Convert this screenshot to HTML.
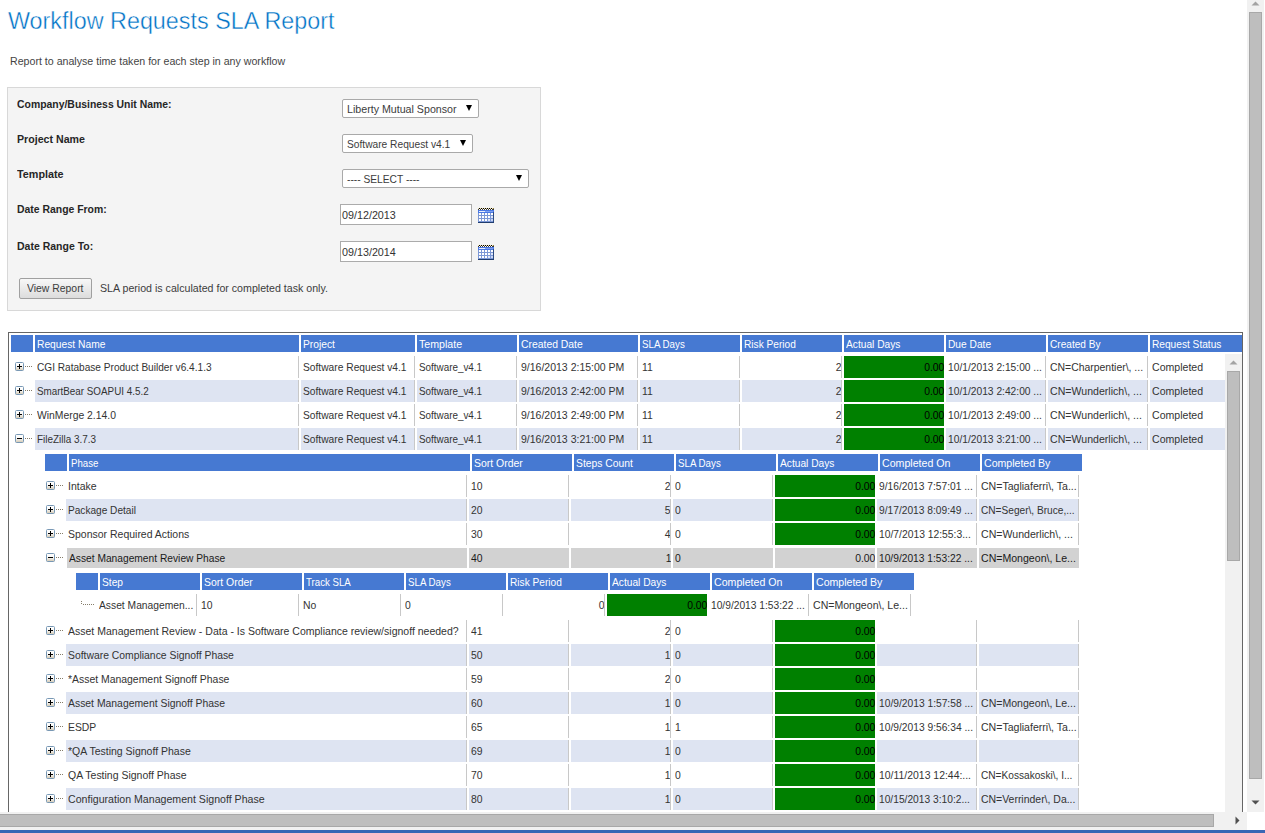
<!DOCTYPE html>
<html lang="en"><head><meta charset="utf-8"><title>Workflow Requests SLA Report</title>
<style>
html,body{margin:0;padding:0;background:#fff;}
body{width:1265px;height:833px;overflow:hidden;position:relative;font-family:"Liberation Sans",sans-serif;color:#333;}
.a{position:absolute;white-space:nowrap;overflow:hidden;}
.t{position:absolute;white-space:nowrap;}
.title{left:8px;top:1px;font-size:23px;letter-spacing:0.0px;color:#0072c6;line-height:40px;height:40px;-webkit-text-stroke:0.4px #fff;}
.sub{left:10px;top:52px;font-size:10.75px;letter-spacing:0.0px;color:#444;line-height:18px;}
.panel{left:7px;top:87px;width:532px;height:222px;border:1px solid #d8d8d8;background:#f4f4f4;}
.lab{left:17px;font-weight:bold;font-size:10.75px;letter-spacing:0.0px;color:#262626;line-height:18px;}
.sel{height:17px;border:1px solid #a9a9a9;border-radius:2px;background:#fff;}
.selt{font-size:10.75px;letter-spacing:0.0px;color:#3c3c3c;line-height:17px;}
.arr{position:absolute;width:0;height:0;border-left:3.5px solid transparent;border-right:3.5px solid transparent;border-top:6px solid #000;}
.inp{height:19px;border:1px solid #ababab;background:#fff;}
.inpt{font-size:10.75px;letter-spacing:0.0px;color:#333;line-height:19px;}
.btn{left:19px;top:278px;width:71px;height:19px;border:1px solid #a0a0a0;border-radius:2px;background:linear-gradient(#f8f8f8,#dcdcdc);}
.btnt{font-size:10.75px;letter-spacing:0.0px;color:#3c3c3c;line-height:18px;}
.h{position:absolute;height:17px;background:#4679d2;color:#fff;font-size:10.75px;letter-spacing:0.0px;line-height:19px;white-space:nowrap;overflow:hidden;box-sizing:border-box;padding-left:2px;}
.c{position:absolute;height:22px;box-sizing:border-box;border-right:1px solid #c8c8c8;font-size:11.5px;letter-spacing:0.0px;line-height:22px;white-space:nowrap;overflow:hidden;padding-left:2px;color:#333;}
.c.r{text-align:right;padding-left:0;}
.c.alt{background:#dee4f2;}
.c.n{border-right:0;}
.c.g{background:#008000;color:#000;border-right:0;}
.c.s{background:#d2d2d2;height:20px;line-height:20px;border-right:0;color:#1a1a1a;}
.x{display:inline-block;transform-origin:0 50%;}
.x.r{transform-origin:100% 50%;}
.ic{position:absolute;width:9px;height:9px;}
.d{position:absolute;width:1px;height:1px;background:#857d6b;}
</style></head>
<body>
<div class="t title"><span class="x" style="transform:scaleX(1.015)">Workflow Requests SLA Report</span></div>
<div class="t sub"><span class="x" style="transform:scaleX(0.988)">Report to analyse time taken for each step in any workflow</span></div>
<div class="a panel"></div>
<div class="t lab" style="top:95px"><span class="x" style="transform:scaleX(0.969)">Company/Business Unit Name:</span></div>
<div class="t lab" style="top:130px"><span class="x" style="transform:scaleX(0.988)">Project Name</span></div>
<div class="t lab" style="top:165px"><span class="x" style="transform:scaleX(1.004)">Template</span></div>
<div class="t lab" style="top:200px"><span class="x" style="transform:scaleX(0.969)">Date Range From:</span></div>
<div class="t lab" style="top:237px"><span class="x" style="transform:scaleX(0.976)">Date Range To:</span></div>
<div class="a sel" style="left:342px;top:99px;width:135px"></div><div class="t selt" style="left:347px;top:101px"><span class="x" style="transform:scaleX(0.991)">Liberty Mutual Sponsor</span></div><div class="arr" style="left:466px;top:105px"></div>
<div class="a sel" style="left:342px;top:134px;width:129px"></div><div class="t selt" style="left:347px;top:136px"><span class="x" style="transform:scaleX(0.949)">Software Request v4.1</span></div><div class="arr" style="left:460px;top:140px"></div>
<div class="a sel" style="left:342px;top:169px;width:185px"></div><div class="t selt" style="left:347px;top:171px"><span class="x" style="transform:scaleX(0.951)">---- SELECT ----</span></div><div class="arr" style="left:516px;top:175px"></div>
<div class="a inp" style="left:340px;top:204px;width:130px"></div><div class="t inpt" style="left:342px;top:206px"><span class="x">09/12/2013</span></div><svg class="a" style="left:478px;top:208px" width="16" height="15" viewBox="0 0 16 15" shape-rendering="crispEdges">
<rect x="0" y="0" width="16" height="1" fill="#efe2b0"/>
<rect x="0" y="1" width="16" height="1" fill="#3a3a3a"/>
<g fill="#000"><rect x="1" y="0" width="1" height="1"/><rect x="3" y="0" width="1" height="1"/><rect x="5" y="0" width="1" height="1"/><rect x="7" y="0" width="1" height="1"/><rect x="9" y="0" width="1" height="1"/><rect x="11" y="0" width="1" height="1"/><rect x="13" y="0" width="1" height="1"/><rect x="15" y="0" width="1" height="1" fill="#8a7a40"/></g>
<g fill="#fff"><rect x="1" y="1" width="1" height="1"/><rect x="3" y="1" width="1" height="1"/><rect x="5" y="1" width="1" height="1"/><rect x="7" y="1" width="1" height="1"/><rect x="9" y="1" width="1" height="1"/><rect x="11" y="1" width="1" height="1"/><rect x="13" y="1" width="1" height="1"/></g>
<rect x="0" y="2" width="16" height="3" fill="#4a78e4"/>
<rect x="1" y="3" width="6" height="1" fill="#e8eefc"/><rect x="7" y="3" width="8" height="1" fill="#7fa0ee"/>
<rect x="0" y="5" width="16" height="10" fill="#7b97d6"/>
<rect x="15" y="4" width="1" height="11" fill="#2c4a80"/>
<rect x="0" y="14" width="16" height="1" fill="#1f3c6e"/>
<g fill="#fff">
<rect x="1" y="5" width="2" height="2"/><rect x="4" y="5" width="2" height="2"/><rect x="7" y="5" width="2" height="2"/><rect x="10" y="5" width="2" height="2"/><rect x="13" y="5" width="2" height="2"/>
<rect x="1" y="8" width="2" height="2"/><rect x="4" y="8" width="2" height="2"/><rect x="7" y="8" width="2" height="2"/><rect x="10" y="8" width="2" height="2"/><rect x="13" y="8" width="2" height="2" fill="#dfe7fa"/>
<rect x="1" y="11" width="2" height="2"/><rect x="4" y="11" width="2" height="2"/><rect x="7" y="11" width="2" height="2"/><rect x="10" y="11" width="2" height="2" fill="#dfe7fa"/><rect x="13" y="11" width="2" height="2" fill="#c9d6f5"/>
</g></svg>
<div class="a inp" style="left:340px;top:241px;width:130px"></div><div class="t inpt" style="left:342px;top:243px"><span class="x">09/13/2014</span></div><svg class="a" style="left:478px;top:245px" width="16" height="15" viewBox="0 0 16 15" shape-rendering="crispEdges">
<rect x="0" y="0" width="16" height="1" fill="#efe2b0"/>
<rect x="0" y="1" width="16" height="1" fill="#3a3a3a"/>
<g fill="#000"><rect x="1" y="0" width="1" height="1"/><rect x="3" y="0" width="1" height="1"/><rect x="5" y="0" width="1" height="1"/><rect x="7" y="0" width="1" height="1"/><rect x="9" y="0" width="1" height="1"/><rect x="11" y="0" width="1" height="1"/><rect x="13" y="0" width="1" height="1"/><rect x="15" y="0" width="1" height="1" fill="#8a7a40"/></g>
<g fill="#fff"><rect x="1" y="1" width="1" height="1"/><rect x="3" y="1" width="1" height="1"/><rect x="5" y="1" width="1" height="1"/><rect x="7" y="1" width="1" height="1"/><rect x="9" y="1" width="1" height="1"/><rect x="11" y="1" width="1" height="1"/><rect x="13" y="1" width="1" height="1"/></g>
<rect x="0" y="2" width="16" height="3" fill="#4a78e4"/>
<rect x="1" y="3" width="6" height="1" fill="#e8eefc"/><rect x="7" y="3" width="8" height="1" fill="#7fa0ee"/>
<rect x="0" y="5" width="16" height="10" fill="#7b97d6"/>
<rect x="15" y="4" width="1" height="11" fill="#2c4a80"/>
<rect x="0" y="14" width="16" height="1" fill="#1f3c6e"/>
<g fill="#fff">
<rect x="1" y="5" width="2" height="2"/><rect x="4" y="5" width="2" height="2"/><rect x="7" y="5" width="2" height="2"/><rect x="10" y="5" width="2" height="2"/><rect x="13" y="5" width="2" height="2"/>
<rect x="1" y="8" width="2" height="2"/><rect x="4" y="8" width="2" height="2"/><rect x="7" y="8" width="2" height="2"/><rect x="10" y="8" width="2" height="2"/><rect x="13" y="8" width="2" height="2" fill="#dfe7fa"/>
<rect x="1" y="11" width="2" height="2"/><rect x="4" y="11" width="2" height="2"/><rect x="7" y="11" width="2" height="2"/><rect x="10" y="11" width="2" height="2" fill="#dfe7fa"/><rect x="13" y="11" width="2" height="2" fill="#c9d6f5"/>
</g></svg>
<div class="a btn"></div><div class="t btnt" style="left:27px;top:279px"><span class="x" style="transform:scaleX(0.968)">View Report</span></div>
<div class="t btnt" style="left:100px;top:279px"><span class="x" style="transform:scaleX(0.989)">SLA period is calculated for completed task only.</span></div>
<div class="a" style="left:8px;top:332px;width:1233px;height:480px;border:1px solid #666;border-bottom:0"></div>
<div class="h" style="left:11px;top:335px;width:22px"></div><div class="h" style="left:35px;top:335px;width:264px"><span class="x" style="transform:scaleX(0.954)">Request Name</span></div><div class="h" style="left:301px;top:335px;width:114px"><span class="x" style="transform:scaleX(0.953)">Project</span></div><div class="h" style="left:417px;top:335px;width:100px"><span class="x" style="transform:scaleX(0.988)">Template</span></div><div class="h" style="left:519px;top:335px;width:119px"><span class="x" style="transform:scaleX(0.966)">Created Date</span></div><div class="h" style="left:640px;top:335px;width:100px"><span class="x" style="transform:scaleX(0.906)">SLA Days</span></div><div class="h" style="left:742px;top:335px;width:100px"><span class="x" style="transform:scaleX(0.942)">Risk Period</span></div><div class="h" style="left:844px;top:335px;width:100px"><span class="x" style="transform:scaleX(0.948)">Actual Days</span></div><div class="h" style="left:946px;top:335px;width:100px"><span class="x" style="transform:scaleX(0.949)">Due Date</span></div><div class="h" style="left:1048px;top:335px;width:100px"><span class="x" style="transform:scaleX(0.939)">Created By</span></div><div class="h" style="left:1150px;top:335px;width:92px"><span class="x" style="transform:scaleX(0.944)">Request Status</span></div>
<svg class="ic" style="left:15px;top:362px" width="9" height="9" viewBox="0 0 9 9"><defs><linearGradient id="g1" x1="0" y1="0" x2="0" y2="1"><stop offset="0" stop-color="#fff"/><stop offset="0.45" stop-color="#fbfaf8"/><stop offset="1" stop-color="#cfc5b0"/></linearGradient></defs><rect x="0.5" y="0.5" width="8" height="8" rx="1" ry="1" fill="url(#g1)" stroke="#7898b5"/><rect x="2" y="4" width="5" height="1" fill="#000"/><rect x="4" y="2" width="1" height="5" fill="#000"/></svg><i class="d" style="left:25px;top:366px"></i><i class="d" style="left:27px;top:366px"></i><i class="d" style="left:29px;top:366px"></i><i class="d" style="left:31px;top:366px"></i><div class="c" style="left:35px;top:356px;width:264px"><span class="x" style="transform:scaleX(0.878)">CGI Ratabase Product Builder v6.4.1.3</span></div><div class="c" style="left:301px;top:356px;width:114px"><span class="x" style="transform:scaleX(0.890)">Software Request v4.1</span></div><div class="c" style="left:417px;top:356px;width:100px"><span class="x" style="transform:scaleX(0.858)">Software_v4.1</span></div><div class="c" style="left:519px;top:356px;width:119px"><span class="x" style="transform:scaleX(0.913)">9/16/2013 2:15:00 PM</span></div><div class="c" style="left:640px;top:356px;width:100px"><span class="x" style="transform:scaleX(0.902)">11</span></div><div class="c r" style="left:742px;top:356px;width:100px"><span class="x r" style="transform:scaleX(0.902)">2</span></div><div class="c r g" style="left:844px;top:356px;width:100px"><span class="x r" style="transform:scaleX(0.902)">0.00</span></div><div class="c" style="left:946px;top:356px;width:100px"><span class="x" style="transform:scaleX(0.890)">10/1/2013 2:15:00 ...</span></div><div class="c" style="left:1048px;top:356px;width:100px"><span class="x" style="transform:scaleX(0.907)">CN=Charpentier\, ...</span></div><div class="c n" style="left:1150px;top:356px;width:75px"><span class="x" style="transform:scaleX(0.919)">Completed</span></div>
<svg class="ic" style="left:15px;top:386px" width="9" height="9" viewBox="0 0 9 9"><defs><linearGradient id="g2" x1="0" y1="0" x2="0" y2="1"><stop offset="0" stop-color="#fff"/><stop offset="0.45" stop-color="#fbfaf8"/><stop offset="1" stop-color="#cfc5b0"/></linearGradient></defs><rect x="0.5" y="0.5" width="8" height="8" rx="1" ry="1" fill="url(#g2)" stroke="#7898b5"/><rect x="2" y="4" width="5" height="1" fill="#000"/><rect x="4" y="2" width="1" height="5" fill="#000"/></svg><i class="d" style="left:25px;top:390px"></i><i class="d" style="left:27px;top:390px"></i><i class="d" style="left:29px;top:390px"></i><i class="d" style="left:31px;top:390px"></i><div class="c alt" style="left:35px;top:380px;width:264px"><span class="x" style="transform:scaleX(0.856)">SmartBear SOAPUI 4.5.2</span></div><div class="c alt" style="left:301px;top:380px;width:114px"><span class="x" style="transform:scaleX(0.890)">Software Request v4.1</span></div><div class="c alt" style="left:417px;top:380px;width:100px"><span class="x" style="transform:scaleX(0.858)">Software_v4.1</span></div><div class="c alt" style="left:519px;top:380px;width:119px"><span class="x" style="transform:scaleX(0.913)">9/16/2013 2:42:00 PM</span></div><div class="c alt" style="left:640px;top:380px;width:100px"><span class="x" style="transform:scaleX(0.902)">11</span></div><div class="c r alt" style="left:742px;top:380px;width:100px"><span class="x r" style="transform:scaleX(0.902)">2</span></div><div class="c r g" style="left:844px;top:380px;width:100px"><span class="x r" style="transform:scaleX(0.902)">0.00</span></div><div class="c alt" style="left:946px;top:380px;width:100px"><span class="x" style="transform:scaleX(0.890)">10/1/2013 2:42:00 ...</span></div><div class="c alt" style="left:1048px;top:380px;width:100px"><span class="x" style="transform:scaleX(0.920)">CN=Wunderlich\, ...</span></div><div class="c n alt" style="left:1150px;top:380px;width:75px"><span class="x" style="transform:scaleX(0.919)">Completed</span></div>
<svg class="ic" style="left:15px;top:410px" width="9" height="9" viewBox="0 0 9 9"><defs><linearGradient id="g3" x1="0" y1="0" x2="0" y2="1"><stop offset="0" stop-color="#fff"/><stop offset="0.45" stop-color="#fbfaf8"/><stop offset="1" stop-color="#cfc5b0"/></linearGradient></defs><rect x="0.5" y="0.5" width="8" height="8" rx="1" ry="1" fill="url(#g3)" stroke="#7898b5"/><rect x="2" y="4" width="5" height="1" fill="#000"/><rect x="4" y="2" width="1" height="5" fill="#000"/></svg><i class="d" style="left:25px;top:414px"></i><i class="d" style="left:27px;top:414px"></i><i class="d" style="left:29px;top:414px"></i><i class="d" style="left:31px;top:414px"></i><div class="c" style="left:35px;top:404px;width:264px"><span class="x" style="transform:scaleX(0.901)">WinMerge 2.14.0</span></div><div class="c" style="left:301px;top:404px;width:114px"><span class="x" style="transform:scaleX(0.890)">Software Request v4.1</span></div><div class="c" style="left:417px;top:404px;width:100px"><span class="x" style="transform:scaleX(0.858)">Software_v4.1</span></div><div class="c" style="left:519px;top:404px;width:119px"><span class="x" style="transform:scaleX(0.913)">9/16/2013 2:49:00 PM</span></div><div class="c" style="left:640px;top:404px;width:100px"><span class="x" style="transform:scaleX(0.902)">11</span></div><div class="c r" style="left:742px;top:404px;width:100px"><span class="x r" style="transform:scaleX(0.902)">2</span></div><div class="c r g" style="left:844px;top:404px;width:100px"><span class="x r" style="transform:scaleX(0.902)">0.00</span></div><div class="c" style="left:946px;top:404px;width:100px"><span class="x" style="transform:scaleX(0.890)">10/1/2013 2:49:00 ...</span></div><div class="c" style="left:1048px;top:404px;width:100px"><span class="x" style="transform:scaleX(0.920)">CN=Wunderlich\, ...</span></div><div class="c n" style="left:1150px;top:404px;width:75px"><span class="x" style="transform:scaleX(0.919)">Completed</span></div>
<svg class="ic" style="left:15px;top:434px" width="9" height="9" viewBox="0 0 9 9"><defs><linearGradient id="g4" x1="0" y1="0" x2="0" y2="1"><stop offset="0" stop-color="#fff"/><stop offset="0.45" stop-color="#fbfaf8"/><stop offset="1" stop-color="#cfc5b0"/></linearGradient></defs><rect x="0.5" y="0.5" width="8" height="8" rx="1" ry="1" fill="url(#g4)" stroke="#7898b5"/><rect x="2" y="4" width="5" height="1" fill="#000"/></svg><i class="d" style="left:25px;top:438px"></i><i class="d" style="left:27px;top:438px"></i><i class="d" style="left:29px;top:438px"></i><i class="d" style="left:31px;top:438px"></i><div class="c alt" style="left:35px;top:428px;width:264px"><span class="x" style="transform:scaleX(0.864)">FileZilla 3.7.3</span></div><div class="c alt" style="left:301px;top:428px;width:114px"><span class="x" style="transform:scaleX(0.890)">Software Request v4.1</span></div><div class="c alt" style="left:417px;top:428px;width:100px"><span class="x" style="transform:scaleX(0.858)">Software_v4.1</span></div><div class="c alt" style="left:519px;top:428px;width:119px"><span class="x" style="transform:scaleX(0.913)">9/16/2013 3:21:00 PM</span></div><div class="c alt" style="left:640px;top:428px;width:100px"><span class="x" style="transform:scaleX(0.902)">11</span></div><div class="c r alt" style="left:742px;top:428px;width:100px"><span class="x r" style="transform:scaleX(0.902)">2</span></div><div class="c r g" style="left:844px;top:428px;width:100px"><span class="x r" style="transform:scaleX(0.902)">0.00</span></div><div class="c alt" style="left:946px;top:428px;width:100px"><span class="x" style="transform:scaleX(0.890)">10/1/2013 3:21:00 ...</span></div><div class="c alt" style="left:1048px;top:428px;width:100px"><span class="x" style="transform:scaleX(0.920)">CN=Wunderlich\, ...</span></div><div class="c n alt" style="left:1150px;top:428px;width:75px"><span class="x" style="transform:scaleX(0.919)">Completed</span></div>
<div class="h" style="left:45px;top:454px;width:22px"></div><div class="h" style="left:69px;top:454px;width:401px"><span class="x" style="transform:scaleX(0.896)">Phase</span></div><div class="h" style="left:472px;top:454px;width:100px"><span class="x" style="transform:scaleX(0.972)">Sort Order</span></div><div class="h" style="left:574px;top:454px;width:100px"><span class="x" style="transform:scaleX(0.960)">Steps Count</span></div><div class="h" style="left:676px;top:454px;width:100px"><span class="x" style="transform:scaleX(0.906)">SLA Days</span></div><div class="h" style="left:778px;top:454px;width:100px"><span class="x" style="transform:scaleX(0.948)">Actual Days</span></div><div class="h" style="left:880px;top:454px;width:100px"><span class="x" style="transform:scaleX(0.987)">Completed On</span></div><div class="h" style="left:982px;top:454px;width:100px"><span class="x" style="transform:scaleX(0.983)">Completed By</span></div>
<svg class="ic" style="left:46px;top:481px" width="9" height="9" viewBox="0 0 9 9"><defs><linearGradient id="g5" x1="0" y1="0" x2="0" y2="1"><stop offset="0" stop-color="#fff"/><stop offset="0.45" stop-color="#fbfaf8"/><stop offset="1" stop-color="#cfc5b0"/></linearGradient></defs><rect x="0.5" y="0.5" width="8" height="8" rx="1" ry="1" fill="url(#g5)" stroke="#7898b5"/><rect x="2" y="4" width="5" height="1" fill="#000"/><rect x="4" y="2" width="1" height="5" fill="#000"/></svg><i class="d" style="left:56px;top:485px"></i><i class="d" style="left:58px;top:485px"></i><i class="d" style="left:60px;top:485px"></i><i class="d" style="left:62px;top:485px"></i><div class="c" style="left:66px;top:475px;width:401px"><span class="x" style="transform:scaleX(0.913)">Intake</span></div><div class="c" style="left:469px;top:475px;width:100px"><span class="x" style="transform:scaleX(0.902)">10</span></div><div class="c r" style="left:571px;top:475px;width:100px"><span class="x r" style="transform:scaleX(0.902)">2</span></div><div class="c" style="left:673px;top:475px;width:100px"><span class="x" style="transform:scaleX(0.902)">0</span></div><div class="c r g" style="left:775px;top:475px;width:100px"><span class="x r" style="transform:scaleX(0.902)">0.00</span></div><div class="c" style="left:877px;top:475px;width:100px"><span class="x" style="transform:scaleX(0.889)">9/16/2013 7:57:01 ...</span></div><div class="c" style="left:979px;top:475px;width:100px"><span class="x" style="transform:scaleX(0.918)">CN=Tagliaferri\, Ta...</span></div>
<svg class="ic" style="left:46px;top:505px" width="9" height="9" viewBox="0 0 9 9"><defs><linearGradient id="g6" x1="0" y1="0" x2="0" y2="1"><stop offset="0" stop-color="#fff"/><stop offset="0.45" stop-color="#fbfaf8"/><stop offset="1" stop-color="#cfc5b0"/></linearGradient></defs><rect x="0.5" y="0.5" width="8" height="8" rx="1" ry="1" fill="url(#g6)" stroke="#7898b5"/><rect x="2" y="4" width="5" height="1" fill="#000"/><rect x="4" y="2" width="1" height="5" fill="#000"/></svg><i class="d" style="left:56px;top:509px"></i><i class="d" style="left:58px;top:509px"></i><i class="d" style="left:60px;top:509px"></i><i class="d" style="left:62px;top:509px"></i><div class="c alt" style="left:66px;top:499px;width:401px"><span class="x" style="transform:scaleX(0.878)">Package Detail</span></div><div class="c alt" style="left:469px;top:499px;width:100px"><span class="x" style="transform:scaleX(0.902)">20</span></div><div class="c r alt" style="left:571px;top:499px;width:100px"><span class="x r" style="transform:scaleX(0.902)">5</span></div><div class="c alt" style="left:673px;top:499px;width:100px"><span class="x" style="transform:scaleX(0.902)">0</span></div><div class="c r g" style="left:775px;top:499px;width:100px"><span class="x r" style="transform:scaleX(0.902)">0.00</span></div><div class="c alt" style="left:877px;top:499px;width:100px"><span class="x" style="transform:scaleX(0.889)">9/17/2013 8:09:49 ...</span></div><div class="c alt" style="left:979px;top:499px;width:100px"><span class="x" style="transform:scaleX(0.880)">CN=Seger\, Bruce,...</span></div>
<svg class="ic" style="left:46px;top:529px" width="9" height="9" viewBox="0 0 9 9"><defs><linearGradient id="g7" x1="0" y1="0" x2="0" y2="1"><stop offset="0" stop-color="#fff"/><stop offset="0.45" stop-color="#fbfaf8"/><stop offset="1" stop-color="#cfc5b0"/></linearGradient></defs><rect x="0.5" y="0.5" width="8" height="8" rx="1" ry="1" fill="url(#g7)" stroke="#7898b5"/><rect x="2" y="4" width="5" height="1" fill="#000"/><rect x="4" y="2" width="1" height="5" fill="#000"/></svg><i class="d" style="left:56px;top:533px"></i><i class="d" style="left:58px;top:533px"></i><i class="d" style="left:60px;top:533px"></i><i class="d" style="left:62px;top:533px"></i><div class="c" style="left:66px;top:523px;width:401px"><span class="x" style="transform:scaleX(0.912)">Sponsor Required Actions</span></div><div class="c" style="left:469px;top:523px;width:100px"><span class="x" style="transform:scaleX(0.902)">30</span></div><div class="c r" style="left:571px;top:523px;width:100px"><span class="x r" style="transform:scaleX(0.902)">4</span></div><div class="c" style="left:673px;top:523px;width:100px"><span class="x" style="transform:scaleX(0.902)">0</span></div><div class="c r g" style="left:775px;top:523px;width:100px"><span class="x r" style="transform:scaleX(0.902)">0.00</span></div><div class="c" style="left:877px;top:523px;width:100px"><span class="x" style="transform:scaleX(0.897)">10/7/2013 12:55:3...</span></div><div class="c" style="left:979px;top:523px;width:100px"><span class="x" style="transform:scaleX(0.920)">CN=Wunderlich\, ...</span></div>
<svg class="ic" style="left:46px;top:553px" width="9" height="9" viewBox="0 0 9 9"><defs><linearGradient id="g8" x1="0" y1="0" x2="0" y2="1"><stop offset="0" stop-color="#fff"/><stop offset="0.45" stop-color="#fbfaf8"/><stop offset="1" stop-color="#cfc5b0"/></linearGradient></defs><rect x="0.5" y="0.5" width="8" height="8" rx="1" ry="1" fill="url(#g8)" stroke="#7898b5"/><rect x="2" y="4" width="5" height="1" fill="#000"/></svg><i class="d" style="left:56px;top:557px"></i><i class="d" style="left:58px;top:557px"></i><i class="d" style="left:60px;top:557px"></i><i class="d" style="left:62px;top:557px"></i><div class="c s" style="left:67px;top:548px;width:400px"><span class="x" style="transform:scaleX(0.889)">Asset Management Review Phase</span></div><div class="c s" style="left:469px;top:548px;width:100px"><span class="x" style="transform:scaleX(0.902)">40</span></div><div class="c r s" style="left:571px;top:548px;width:100px"><span class="x r" style="transform:scaleX(0.902)">1</span></div><div class="c s" style="left:673px;top:548px;width:100px"><span class="x" style="transform:scaleX(0.902)">0</span></div><div class="c r s" style="left:775px;top:548px;width:100px"><span class="x r" style="transform:scaleX(0.902)">0.00</span></div><div class="c s" style="left:877px;top:548px;width:100px"><span class="x" style="transform:scaleX(0.889)">10/9/2013 1:53:22 ...</span></div><div class="c s" style="left:979px;top:548px;width:100px"><span class="x" style="transform:scaleX(0.919)">CN=Mongeon\, Le...</span></div>
<svg class="ic" style="left:46px;top:626px" width="9" height="9" viewBox="0 0 9 9"><defs><linearGradient id="g9" x1="0" y1="0" x2="0" y2="1"><stop offset="0" stop-color="#fff"/><stop offset="0.45" stop-color="#fbfaf8"/><stop offset="1" stop-color="#cfc5b0"/></linearGradient></defs><rect x="0.5" y="0.5" width="8" height="8" rx="1" ry="1" fill="url(#g9)" stroke="#7898b5"/><rect x="2" y="4" width="5" height="1" fill="#000"/><rect x="4" y="2" width="1" height="5" fill="#000"/></svg><i class="d" style="left:56px;top:630px"></i><i class="d" style="left:58px;top:630px"></i><i class="d" style="left:60px;top:630px"></i><i class="d" style="left:62px;top:630px"></i><div class="c" style="left:66px;top:620px;width:401px"><span class="x" style="transform:scaleX(0.914)">Asset Management Review - Data - Is Software Compliance review/signoff needed?</span></div><div class="c" style="left:469px;top:620px;width:100px"><span class="x" style="transform:scaleX(0.902)">41</span></div><div class="c r" style="left:571px;top:620px;width:100px"><span class="x r" style="transform:scaleX(0.902)">2</span></div><div class="c" style="left:673px;top:620px;width:100px"><span class="x" style="transform:scaleX(0.902)">0</span></div><div class="c r g" style="left:775px;top:620px;width:100px"><span class="x r" style="transform:scaleX(0.902)">0.00</span></div><div class="c" style="left:877px;top:620px;width:100px"></div><div class="c" style="left:979px;top:620px;width:100px"></div>
<svg class="ic" style="left:46px;top:650px" width="9" height="9" viewBox="0 0 9 9"><defs><linearGradient id="g10" x1="0" y1="0" x2="0" y2="1"><stop offset="0" stop-color="#fff"/><stop offset="0.45" stop-color="#fbfaf8"/><stop offset="1" stop-color="#cfc5b0"/></linearGradient></defs><rect x="0.5" y="0.5" width="8" height="8" rx="1" ry="1" fill="url(#g10)" stroke="#7898b5"/><rect x="2" y="4" width="5" height="1" fill="#000"/><rect x="4" y="2" width="1" height="5" fill="#000"/></svg><i class="d" style="left:56px;top:654px"></i><i class="d" style="left:58px;top:654px"></i><i class="d" style="left:60px;top:654px"></i><i class="d" style="left:62px;top:654px"></i><div class="c alt" style="left:66px;top:644px;width:401px"><span class="x" style="transform:scaleX(0.902)">Software Compliance Signoff Phase</span></div><div class="c alt" style="left:469px;top:644px;width:100px"><span class="x" style="transform:scaleX(0.902)">50</span></div><div class="c r alt" style="left:571px;top:644px;width:100px"><span class="x r" style="transform:scaleX(0.902)">1</span></div><div class="c alt" style="left:673px;top:644px;width:100px"><span class="x" style="transform:scaleX(0.902)">0</span></div><div class="c r g" style="left:775px;top:644px;width:100px"><span class="x r" style="transform:scaleX(0.902)">0.00</span></div><div class="c alt" style="left:877px;top:644px;width:100px"></div><div class="c alt" style="left:979px;top:644px;width:100px"></div>
<svg class="ic" style="left:46px;top:674px" width="9" height="9" viewBox="0 0 9 9"><defs><linearGradient id="g11" x1="0" y1="0" x2="0" y2="1"><stop offset="0" stop-color="#fff"/><stop offset="0.45" stop-color="#fbfaf8"/><stop offset="1" stop-color="#cfc5b0"/></linearGradient></defs><rect x="0.5" y="0.5" width="8" height="8" rx="1" ry="1" fill="url(#g11)" stroke="#7898b5"/><rect x="2" y="4" width="5" height="1" fill="#000"/><rect x="4" y="2" width="1" height="5" fill="#000"/></svg><i class="d" style="left:56px;top:678px"></i><i class="d" style="left:58px;top:678px"></i><i class="d" style="left:60px;top:678px"></i><i class="d" style="left:62px;top:678px"></i><div class="c" style="left:66px;top:668px;width:401px"><span class="x" style="transform:scaleX(0.906)">*Asset Management Signoff Phase</span></div><div class="c" style="left:469px;top:668px;width:100px"><span class="x" style="transform:scaleX(0.902)">59</span></div><div class="c r" style="left:571px;top:668px;width:100px"><span class="x r" style="transform:scaleX(0.902)">2</span></div><div class="c" style="left:673px;top:668px;width:100px"><span class="x" style="transform:scaleX(0.902)">0</span></div><div class="c r g" style="left:775px;top:668px;width:100px"><span class="x r" style="transform:scaleX(0.902)">0.00</span></div><div class="c" style="left:877px;top:668px;width:100px"></div><div class="c" style="left:979px;top:668px;width:100px"></div>
<svg class="ic" style="left:46px;top:698px" width="9" height="9" viewBox="0 0 9 9"><defs><linearGradient id="g12" x1="0" y1="0" x2="0" y2="1"><stop offset="0" stop-color="#fff"/><stop offset="0.45" stop-color="#fbfaf8"/><stop offset="1" stop-color="#cfc5b0"/></linearGradient></defs><rect x="0.5" y="0.5" width="8" height="8" rx="1" ry="1" fill="url(#g12)" stroke="#7898b5"/><rect x="2" y="4" width="5" height="1" fill="#000"/><rect x="4" y="2" width="1" height="5" fill="#000"/></svg><i class="d" style="left:56px;top:702px"></i><i class="d" style="left:58px;top:702px"></i><i class="d" style="left:60px;top:702px"></i><i class="d" style="left:62px;top:702px"></i><div class="c alt" style="left:66px;top:692px;width:401px"><span class="x" style="transform:scaleX(0.904)">Asset Management Signoff Phase</span></div><div class="c alt" style="left:469px;top:692px;width:100px"><span class="x" style="transform:scaleX(0.902)">60</span></div><div class="c r alt" style="left:571px;top:692px;width:100px"><span class="x r" style="transform:scaleX(0.902)">1</span></div><div class="c alt" style="left:673px;top:692px;width:100px"><span class="x" style="transform:scaleX(0.902)">0</span></div><div class="c r g" style="left:775px;top:692px;width:100px"><span class="x r" style="transform:scaleX(0.902)">0.00</span></div><div class="c alt" style="left:877px;top:692px;width:100px"><span class="x" style="transform:scaleX(0.891)">10/9/2013 1:57:58 ...</span></div><div class="c alt" style="left:979px;top:692px;width:100px"><span class="x" style="transform:scaleX(0.919)">CN=Mongeon\, Le...</span></div>
<svg class="ic" style="left:46px;top:722px" width="9" height="9" viewBox="0 0 9 9"><defs><linearGradient id="g13" x1="0" y1="0" x2="0" y2="1"><stop offset="0" stop-color="#fff"/><stop offset="0.45" stop-color="#fbfaf8"/><stop offset="1" stop-color="#cfc5b0"/></linearGradient></defs><rect x="0.5" y="0.5" width="8" height="8" rx="1" ry="1" fill="url(#g13)" stroke="#7898b5"/><rect x="2" y="4" width="5" height="1" fill="#000"/><rect x="4" y="2" width="1" height="5" fill="#000"/></svg><i class="d" style="left:56px;top:726px"></i><i class="d" style="left:58px;top:726px"></i><i class="d" style="left:60px;top:726px"></i><i class="d" style="left:62px;top:726px"></i><div class="c" style="left:66px;top:716px;width:401px"><span class="x" style="transform:scaleX(0.902)">ESDP</span></div><div class="c" style="left:469px;top:716px;width:100px"><span class="x" style="transform:scaleX(0.902)">65</span></div><div class="c r" style="left:571px;top:716px;width:100px"><span class="x r" style="transform:scaleX(0.902)">1</span></div><div class="c" style="left:673px;top:716px;width:100px"><span class="x" style="transform:scaleX(0.902)">1</span></div><div class="c r g" style="left:775px;top:716px;width:100px"><span class="x r" style="transform:scaleX(0.902)">0.00</span></div><div class="c" style="left:877px;top:716px;width:100px"><span class="x" style="transform:scaleX(0.891)">10/9/2013 9:56:34 ...</span></div><div class="c" style="left:979px;top:716px;width:100px"><span class="x" style="transform:scaleX(0.918)">CN=Tagliaferri\, Ta...</span></div>
<svg class="ic" style="left:46px;top:746px" width="9" height="9" viewBox="0 0 9 9"><defs><linearGradient id="g14" x1="0" y1="0" x2="0" y2="1"><stop offset="0" stop-color="#fff"/><stop offset="0.45" stop-color="#fbfaf8"/><stop offset="1" stop-color="#cfc5b0"/></linearGradient></defs><rect x="0.5" y="0.5" width="8" height="8" rx="1" ry="1" fill="url(#g14)" stroke="#7898b5"/><rect x="2" y="4" width="5" height="1" fill="#000"/><rect x="4" y="2" width="1" height="5" fill="#000"/></svg><i class="d" style="left:56px;top:750px"></i><i class="d" style="left:58px;top:750px"></i><i class="d" style="left:60px;top:750px"></i><i class="d" style="left:62px;top:750px"></i><div class="c alt" style="left:66px;top:740px;width:401px"><span class="x" style="transform:scaleX(0.913)">*QA Testing Signoff Phase</span></div><div class="c alt" style="left:469px;top:740px;width:100px"><span class="x" style="transform:scaleX(0.902)">69</span></div><div class="c r alt" style="left:571px;top:740px;width:100px"><span class="x r" style="transform:scaleX(0.902)">1</span></div><div class="c alt" style="left:673px;top:740px;width:100px"><span class="x" style="transform:scaleX(0.902)">0</span></div><div class="c r g" style="left:775px;top:740px;width:100px"><span class="x r" style="transform:scaleX(0.902)">0.00</span></div><div class="c alt" style="left:877px;top:740px;width:100px"></div><div class="c alt" style="left:979px;top:740px;width:100px"></div>
<svg class="ic" style="left:46px;top:770px" width="9" height="9" viewBox="0 0 9 9"><defs><linearGradient id="g15" x1="0" y1="0" x2="0" y2="1"><stop offset="0" stop-color="#fff"/><stop offset="0.45" stop-color="#fbfaf8"/><stop offset="1" stop-color="#cfc5b0"/></linearGradient></defs><rect x="0.5" y="0.5" width="8" height="8" rx="1" ry="1" fill="url(#g15)" stroke="#7898b5"/><rect x="2" y="4" width="5" height="1" fill="#000"/><rect x="4" y="2" width="1" height="5" fill="#000"/></svg><i class="d" style="left:56px;top:774px"></i><i class="d" style="left:58px;top:774px"></i><i class="d" style="left:60px;top:774px"></i><i class="d" style="left:62px;top:774px"></i><div class="c" style="left:66px;top:764px;width:401px"><span class="x" style="transform:scaleX(0.912)">QA Testing Signoff Phase</span></div><div class="c" style="left:469px;top:764px;width:100px"><span class="x" style="transform:scaleX(0.902)">70</span></div><div class="c r" style="left:571px;top:764px;width:100px"><span class="x r" style="transform:scaleX(0.902)">1</span></div><div class="c" style="left:673px;top:764px;width:100px"><span class="x" style="transform:scaleX(0.902)">0</span></div><div class="c r g" style="left:775px;top:764px;width:100px"><span class="x r" style="transform:scaleX(0.902)">0.00</span></div><div class="c" style="left:877px;top:764px;width:100px"><span class="x" style="transform:scaleX(0.907)">10/11/2013 12:44:...</span></div><div class="c" style="left:979px;top:764px;width:100px"><span class="x" style="transform:scaleX(0.880)">CN=Kossakoski\, I...</span></div>
<svg class="ic" style="left:46px;top:794px" width="9" height="9" viewBox="0 0 9 9"><defs><linearGradient id="g16" x1="0" y1="0" x2="0" y2="1"><stop offset="0" stop-color="#fff"/><stop offset="0.45" stop-color="#fbfaf8"/><stop offset="1" stop-color="#cfc5b0"/></linearGradient></defs><rect x="0.5" y="0.5" width="8" height="8" rx="1" ry="1" fill="url(#g16)" stroke="#7898b5"/><rect x="2" y="4" width="5" height="1" fill="#000"/><rect x="4" y="2" width="1" height="5" fill="#000"/></svg><i class="d" style="left:56px;top:798px"></i><i class="d" style="left:58px;top:798px"></i><i class="d" style="left:60px;top:798px"></i><i class="d" style="left:62px;top:798px"></i><div class="c alt" style="left:66px;top:788px;width:401px"><span class="x" style="transform:scaleX(0.922)">Configuration Management Signoff Phase</span></div><div class="c alt" style="left:469px;top:788px;width:100px"><span class="x" style="transform:scaleX(0.902)">80</span></div><div class="c r alt" style="left:571px;top:788px;width:100px"><span class="x r" style="transform:scaleX(0.902)">1</span></div><div class="c alt" style="left:673px;top:788px;width:100px"><span class="x" style="transform:scaleX(0.902)">0</span></div><div class="c r g" style="left:775px;top:788px;width:100px"><span class="x r" style="transform:scaleX(0.902)">0.00</span></div><div class="c alt" style="left:877px;top:788px;width:100px"><span class="x" style="transform:scaleX(0.889)">10/15/2013 3:10:2...</span></div><div class="c alt" style="left:979px;top:788px;width:100px"><span class="x" style="transform:scaleX(0.909)">CN=Verrinder\, Da...</span></div>
<div class="h" style="left:76px;top:573px;width:22px"></div><div class="h" style="left:100px;top:573px;width:100px"><span class="x" style="transform:scaleX(0.949)">Step</span></div><div class="h" style="left:202px;top:573px;width:100px"><span class="x" style="transform:scaleX(0.972)">Sort Order</span></div><div class="h" style="left:304px;top:573px;width:100px"><span class="x" style="transform:scaleX(0.900)">Track SLA</span></div><div class="h" style="left:406px;top:573px;width:100px"><span class="x" style="transform:scaleX(0.906)">SLA Days</span></div><div class="h" style="left:508px;top:573px;width:100px"><span class="x" style="transform:scaleX(0.942)">Risk Period</span></div><div class="h" style="left:610px;top:573px;width:100px"><span class="x" style="transform:scaleX(0.948)">Actual Days</span></div><div class="h" style="left:712px;top:573px;width:100px"><span class="x" style="transform:scaleX(0.987)">Completed On</span></div><div class="h" style="left:814px;top:573px;width:100px"><span class="x" style="transform:scaleX(0.983)">Completed By</span></div>
<i class="d" style="left:81px;top:601px"></i><i class="d" style="left:81px;top:603px"></i><i class="d" style="left:83px;top:604px"></i><i class="d" style="left:85px;top:604px"></i><i class="d" style="left:87px;top:604px"></i><i class="d" style="left:89px;top:604px"></i><i class="d" style="left:91px;top:604px"></i><i class="d" style="left:93px;top:604px"></i><div class="c" style="left:97px;top:594px;width:100px"><span class="x" style="transform:scaleX(0.894)">Asset Managemen...</span></div><div class="c" style="left:199px;top:594px;width:100px"><span class="x" style="transform:scaleX(0.902)">10</span></div><div class="c" style="left:301px;top:594px;width:100px"><span class="x" style="transform:scaleX(0.902)">No</span></div><div class="c" style="left:403px;top:594px;width:100px"><span class="x" style="transform:scaleX(0.902)">0</span></div><div class="c r" style="left:505px;top:594px;width:100px"><span class="x r" style="transform:scaleX(0.902)">0</span></div><div class="c r g" style="left:607px;top:594px;width:100px"><span class="x r" style="transform:scaleX(0.902)">0.00</span></div><div class="c" style="left:709px;top:594px;width:100px"><span class="x" style="transform:scaleX(0.889)">10/9/2013 1:53:22 ...</span></div><div class="c" style="left:811px;top:594px;width:100px"><span class="x" style="transform:scaleX(0.919)">CN=Mongeon\, Le...</span></div>
<div class="a" style="left:1225px;top:354px;width:17px;height:458px;background:#f1f1f1"></div><div class="a" style="left:1227px;top:371px;width:11px;height:188px;background:#bebebe;border:1px solid #a8a8a8"></div><svg class="a" style="left:1229px;top:360px" width="9" height="5" viewBox="0 0 9 5"><path d="M0.5 4.5 L4.5 0.5 L8.5 4.5 Z" fill="#a3a3a3"/></svg>
<div class="a" style="left:1247px;top:0;width:17px;height:812px;background:#f1f1f1"></div><div class="a" style="left:1249px;top:12px;width:11px;height:765px;background:#bebebe;border:1px solid #a8a8a8"></div><svg class="a" style="left:1251px;top:1px" width="9" height="5" viewBox="0 0 9 5"><path d="M0.5 4.5 L4.5 0.5 L8.5 4.5 Z" fill="#a3a3a3"/></svg><svg class="a" style="left:1251px;top:800px" width="9" height="5" viewBox="0 0 9 5"><path d="M0.5 0.5 L4.5 4.5 L8.5 0.5 Z" fill="#505050"/></svg>
<div class="a" style="left:0;top:812px;width:1247px;height:18px;background:#f1f1f1"></div><div class="a" style="left:-2px;top:814px;width:1214px;height:11px;background:#bebebe;border:1px solid #a8a8a8"></div><svg class="a" style="left:1235px;top:816px" width="5" height="9" viewBox="0 0 5 9"><path d="M0.5 0.5 L4.5 4.5 L0.5 8.5 Z" fill="#505050"/></svg><div class="a" style="left:1247px;top:812px;width:18px;height:17px;background:#fff"></div><div class="a" style="left:0;top:830px;width:1265px;height:3px;background:#3a66b4"></div>
</body></html>
